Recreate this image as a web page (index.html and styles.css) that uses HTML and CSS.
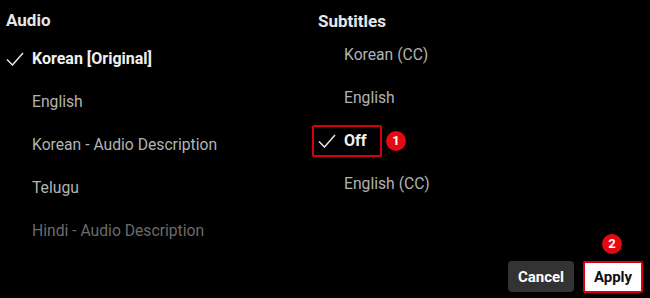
FILE: index.html
```html
<!DOCTYPE html>
<html lang="en">
<head>
    <meta charset="UTF-8">
    <meta name="viewport" content="width=device-width, initial-scale=1.0">
    <title>Audio &amp; Subtitles</title>
    <link rel="stylesheet" href="styles.css">
</head>
<body>
    <div class="panel">
        <div class="columns">
            <!-- Audio tracks -->
            <div class="column audio">
                <h2 class="column-title">Audio</h2>
                <ul class="track-list">
                    <li class="track selected">
                        <svg class="check" viewBox="0 0 18 14"><path d="M1 7.5 L6.5 13 L17 1" /></svg>
                        <span>Korean [Original]</span>
                    </li>
                    <li class="track"><span class="check"></span><span>English</span></li>
                    <li class="track"><span class="check"></span><span>Korean - Audio Description</span></li>
                    <li class="track"><span class="check"></span><span>Telugu</span></li>
                    <li class="track disabled"><span class="check"></span><span>Hindi - Audio Description</span></li>
                </ul>
            </div>

            <!-- Subtitle tracks -->
            <div class="column subtitles">
                <h2 class="column-title">Subtitles</h2>
                <ul class="track-list">
                    <li class="track"><span class="check"></span><span>Korean (CC)</span></li>
                    <li class="track"><span class="check"></span><span>English</span></li>
                    <li class="track selected highlight">
                        <svg class="check" viewBox="0 0 18 14"><path d="M1 7.5 L6.5 13 L17 1" /></svg>
                        <span>Off</span>
                        <span class="badge badge-side">1</span>
                    </li>
                    <li class="track"><span class="check"></span><span>English (CC)</span></li>
                </ul>
            </div>
        </div>

        <div class="actions">
            <button class="btn btn-cancel">Cancel</button>
            <button class="btn btn-apply">Apply<span class="badge badge-top">2</span></button>
        </div>
    </div>
</body>
</html>
```

FILE: styles.css
```css
* {
    margin: 0;
    padding: 0;
    box-sizing: border-box;
    font-family: Roboto, 'Liberation Sans', Arial, sans-serif;
}

body {
    background: #000;
    width: 650px;
    height: 298px;
    overflow: hidden;
}

.panel {
    height: 100%;
    display: flex;
    flex-direction: column;
}

.columns {
    display: flex;
}

.column {
    width: 312px;
}

.column-title {
    color: #e6e6e6;
    font-size: 17px;
    font-weight: 700;
    line-height: 20px;
    padding-left: 6px;
    margin-top: 10px;
}

.subtitles .column-title {
    margin-top: 11px;
}

.track-list {
    list-style: none;
}

.audio .track-list {
    margin-top: 7px;
}

.subtitles .track-list {
    margin-top: 2px;
}

/* Track rows */
.track {
    height: 43px;
    display: flex;
    align-items: center;
    color: #b3b3b3;
    font-size: 15.7px;
    line-height: 20px;
}

.track .check {
    width: 18px;
    height: 14px;
    flex-shrink: 0;
    margin: 0 8px 0 6px;
}

.track svg.check path {
    fill: none;
    stroke: #e6e6e6;
    stroke-width: 1.5;
}

.track.selected {
    color: #f0f0f0;
    font-weight: 700;
    font-size: 16px;
}

.track.disabled {
    color: #6b6b6b;
}

/* The selected "Off" row gets a red outline */
.track.highlight {
    position: relative;
    height: 32px;
    margin: 6px 0 5px;
    width: 70px;
    border: 2px solid #d9000d;
    border-radius: 2px;
}

.track.highlight .check {
    margin-left: 4px;
}

/* Numbered step markers */
.badge {
    position: absolute;
    width: 20px;
    height: 20px;
    border-radius: 50%;
    background: #e50914;
    color: #fff;
    font-size: 13px;
    font-weight: 700;
    line-height: 20px;
    text-align: center;
}

.badge-side {
    left: 72px;
    top: 4px;
}

.badge-top {
    left: 17px;
    top: -29px;
}

/* Footer buttons */
.actions {
    margin-top: auto;
    display: flex;
    justify-content: flex-end;
    gap: 9px;
    padding: 0 7px 5px 0;
}

.btn {
    height: 31px;
    border: none;
    border-radius: 4px;
    font-size: 15px;
    font-weight: 700;
    cursor: pointer;
}

.btn-cancel {
    width: 66px;
    background: #333;
    color: #fff;
}

.btn-apply {
    position: relative;
    width: 60px;
    height: 32px;
    background: #fff;
    color: #111;
    border: 2px solid #d9000d;
    border-radius: 2px;
}
```
